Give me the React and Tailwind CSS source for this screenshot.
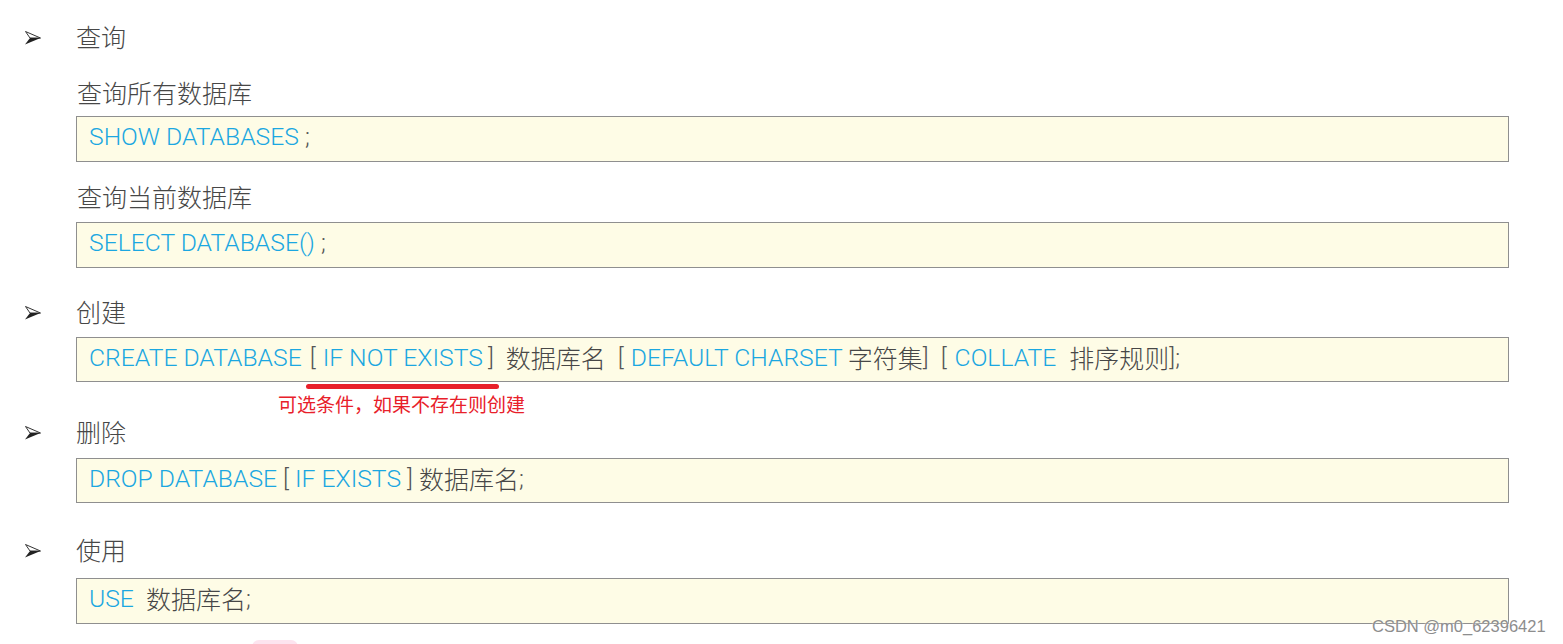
const cjk = { fontFamily: '"Noto Sans CJK SC", "Noto Sans", sans-serif' };
const latin = { fontFamily: 'Roboto, "Noto Sans CJK SC", sans-serif' };

const Bullet = () => (
    <svg width="16" height="14" viewBox="0 0 16 14" className="block">
        <polygon points="0.5,0.5 15.5,7 5,7" fill="none" stroke="#333" strokeWidth="1" strokeLinejoin="round" />
        <polygon points="0,13.5 15.5,7 5,7" fill="#222" />
    </svg>
);

const Title = ({ children, className = "" }) => (
    <div className={`flex items-start h-8 ${className}`}>
        <div className="w-[76px] h-8 pl-[25px] flex items-center">
            <Bullet />
        </div>
        <span className="text-[25px] text-[#474747] leading-7 font-light" style={cjk}>{children}</span>
    </div>
);

const Label = ({ children, className = "" }) => (
    <div className={`ml-[77px] h-8 text-[25px] leading-7 font-light text-[#474747] ${className}`} style={cjk}>
        {children}
    </div>
);

const K = ({ children, className = "" }) => (
    <span className={`text-[24.7px] text-[#1ba7e1] font-light ${className}`} style={latin}>{children}</span>
);

const T = ({ children, className = "" }) => (
    <span className={`text-[25px] text-[#474747] font-light ${className}`} style={cjk}>{children}</span>
);

const P = ({ children, className = "" }) => (
    <span className={`text-[24.7px] text-[#555] font-light ${className}`} style={latin}>{children}</span>
);

const Box = ({ children, className = "", h = "h-[46px]" }) => (
    <div
        className={`ml-[76px] w-[1433px] ${h} flex items-center pl-[12px] pb-[4px] whitespace-pre bg-[#fefce6] border border-[#8f8f8f] ${className}`}
    >
        {children}
    </div>
);

export default function App() {
    return (
        <div className="relative w-[1563px] h-[644px] bg-white overflow-hidden">
            <div className="pt-[22px]">
                <Title>查询</Title>
                <Label className="mt-[24px]">查询所有数据库</Label>
                <Box className="mt-[6px]">
                    <K>SHOW DATABASES</K><P> ;</P>
                </Box>
                <Label className="mt-[20px]">查询当前数据库</Label>
                <Box className="mt-[8px]">
                    <K>SELECT DATABASE()</K><P> ;</P>
                </Box>

                <Title className="mt-[29px]">创建</Title>
                <Box className="mt-[8px]" h="h-[45px]">
                    <K>CREATE DATABASE</K>
                    <P className="ml-[8px]">[</P>
                    <K className="ml-[7px]">IF NOT EXISTS</K>
                    <P className="ml-[5px]">]</P>
                    <T className="ml-[12px]">数据库名</T>
                    <P className="ml-[12px]">[</P>
                    <K className="ml-[7px]">DEFAULT CHARSET</K>
                    <T className="ml-[5px]">字符集</T>
                    <P>]</P>
                    <P className="ml-[12px]">[</P>
                    <K className="ml-[8px]">COLLATE</K>
                    <T className="ml-[13px]">排序规则</T>
                    <P>];</P>
                </Box>
                <div className="relative h-[33px]">
                    <div className="absolute left-[306px] top-[2px] w-[193px] h-[5px] rounded-full bg-[#e8202a]" />
                    <div className="absolute left-[278px] top-[12px] text-[19px] leading-5 text-[#e8202a]" style={cjk}>
                        可选条件，如果不存在则创建
                    </div>
                </div>

                <Title className="mt-[2px]">删除</Title>
                <Box className="mt-[9px]" h="h-[45px]">
                    <K>DROP DATABASE</K><P> [ </P><K>IF EXISTS</K><P> ] </P><T>数据库名</T><P>;</P>
                </Box>

                <Title className="mt-[32px]">使用</Title>
                <Box className="mt-[11px]">
                    <K>USE</K><P>  </P><T>数据库名</T><P>;</P>
                </Box>
            </div>

            <div className="absolute left-[252px] top-[640px] w-[46px] h-[14px] rounded-full bg-[#fde4ef]" />
            <div
                className="absolute left-[1372px] top-[616px] text-[16.5px] leading-5 text-[#8d8d8d] [text-shadow:0_0_2px_#fff]"
                style={{ fontFamily: '"Liberation Sans", Arial, sans-serif' }}
            >
                CSDN @m0_62396421
            </div>
        </div>
    );
}
